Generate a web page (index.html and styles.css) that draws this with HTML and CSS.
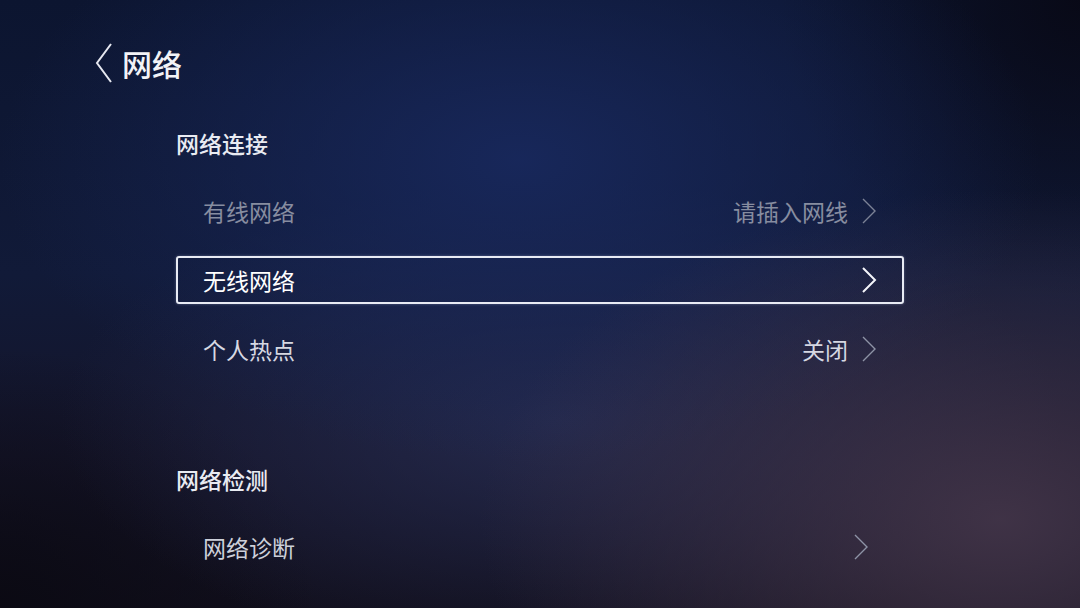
FILE: index.html
```html
<!DOCTYPE html>
<html lang="zh-CN">
<head>
<meta charset="utf-8">
<title>网络</title>
<link rel="stylesheet" href="styles.css">
</head>
<body>
<div class="screen">
  <header class="topbar">
    <svg class="back" width="20" height="42" viewBox="0 0 20 42"><path d="M17 2 L3 21 L17 40" fill="none" stroke="#e6e8f0" stroke-width="2" stroke-linejoin="miter"/></svg>
    <h1 class="title">网络</h1>
  </header>
  <main class="content">
    <section class="group">
      <h2 class="group-title">网络连接</h2>
      <div class="rows">
        <div class="row dim">
          <span class="label">有线网络</span>
          <span class="value">请插入网线</span>
          <svg class="chev" width="16" height="28" viewBox="0 0 16 28"><path d="M2 2 L14 14 L2 26" fill="none" stroke="currentColor" stroke-width="1.4"/></svg>
        </div>
        <div class="row focused">
          <span class="label">无线网络</span>
          <svg class="chev" width="16" height="28" viewBox="0 0 16 28"><path d="M2 2 L14 14 L2 26" fill="none" stroke="currentColor" stroke-width="2"/></svg>
        </div>
        <div class="row">
          <span class="label">个人热点</span>
          <span class="value">关闭</span>
          <svg class="chev faint" width="16" height="28" viewBox="0 0 16 28"><path d="M2 2 L14 14 L2 26" fill="none" stroke="currentColor" stroke-width="1.4"/></svg>
        </div>
      </div>
    </section>
    <section class="group second">
      <h2 class="group-title">网络检测</h2>
      <div class="rows">
        <div class="row">
          <span class="label soft">网络诊断</span>
          <svg class="chev faint shift" width="16" height="28" viewBox="0 0 16 28"><path d="M2 2 L14 14 L2 26" fill="none" stroke="currentColor" stroke-width="1.4"/></svg>
        </div>
      </div>
    </section>
  </main>
</div>
</body>
</html>
```
FILE: styles.css
```css
html, body {
  margin: 0;
  padding: 0;
}
body {
  width: 1080px;
  height: 608px;
  overflow: hidden;
  font-family: "Noto Sans CJK SC", "Noto Sans", sans-serif;
  color: #eceef4;
}
.screen {
  width: 1080px;
  height: 608px;
  box-sizing: border-box;
  padding-top: 41px;
  background:
    radial-gradient(ellipse 520px 330px at 1000px 520px, rgba(68,54,74,0.9), rgba(68,54,74,0) 100%),
    radial-gradient(ellipse 520px 300px at 520px 160px, rgba(24,40,92,0.95), rgba(24,40,92,0) 100%),
    radial-gradient(ellipse 500px 240px at 560px 420px, rgba(40,46,84,0.8), rgba(40,46,84,0) 100%),
    radial-gradient(ellipse 300px 300px at 1080px 0px, rgba(8,8,20,0.9), rgba(8,8,20,0) 100%),
    radial-gradient(ellipse 320px 260px at 0px 608px, rgba(10,9,18,0.9), rgba(10,9,18,0) 100%),
    linear-gradient(180deg, #0c1530 0%, #111a38 45%, #15152a 75%, #110f1c 100%);
}
.topbar {
  display: flex;
  align-items: center;
  gap: 8px;
  padding-left: 94px;
  height: 44px;
}
.back {
  display: block;
}
.title {
  margin: 0;
  font-size: 30px;
  font-weight: 500;
  line-height: 40px;
  color: #f2f3f7;
}
.content {
  margin-left: 176px;
  width: 728px;
  margin-top: 43px;
}
.group-title {
  margin: 0;
  font-size: 23px;
  font-weight: 500;
  line-height: 30px;
  color: #e9ebf2;
}
.rows {
  display: flex;
  flex-direction: column;
  gap: 21px;
  margin-top: 29px;
}
.second {
  margin-top: 91px;
}
.row {
  display: flex;
  align-items: center;
  height: 48px;
  box-sizing: border-box;
  padding: 0 25px 0 25px;
  border: 2px solid transparent;
  border-radius: 3px;
  font-size: 23px;
  color: #d6d8e2;
}
.label {
  flex: 1;
}
.value {
  margin-right: 13px;
}
.chev {
  display: block;
  color: #c4c7d4;
}
.chev.faint {
  color: #8e93a6;
}
.chev.shift {
  margin-right: 8px;
}
.row.dim {
  color: #878da0;
}
.row.dim .chev {
  color: #7c8296;
}
.row.focused {
  border-color: #e8ebf4;
  color: #ffffff;
  box-shadow: 0 0 3px rgba(200,210,240,0.35);
}
.row.focused .chev {
  color: #f4f5fa;
}
.soft {
  color: #cdd0da;
}
```
